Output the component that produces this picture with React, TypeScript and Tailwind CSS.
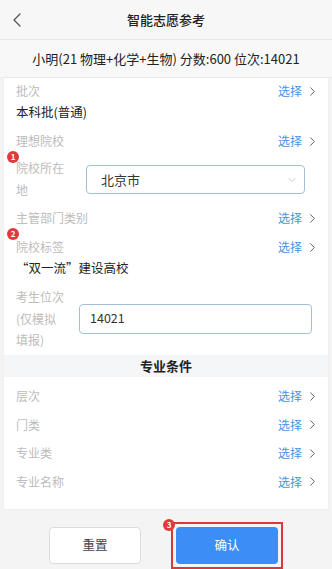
import { ChevronLeft, ChevronRight, ChevronDown } from "lucide-react"

const font = { fontFamily: '"Noto Sans CJK SC", "Noto Sans", sans-serif' }

function Badge({ n }: { n: number }) {
  return (
    <span className="absolute left-[-9px] top-[-6px] w-[12px] h-[12px] rounded-full bg-[#e23a3a] text-white text-[8px] leading-[12px] text-center font-bold">
      {n}
    </span>
  )
}

function SelectLink() {
  return (
    <div className="flex items-center gap-[3px]">
      <span className="text-[#4a92dd] text-[12px]">选择</span>
      <ChevronRight className="w-[15px] h-[15px] text-[#555]" strokeWidth={1.5} />
    </div>
  )
}

function PickRow({ label }: { label: string }) {
  return (
    <div className="flex items-center justify-between h-[26px]">
      <span className="text-[#bcbcbc] text-[12px]">{label}</span>
      <SelectLink />
    </div>
  )
}

export default function App() {
  return (
    <div style={font} className="w-[332px] h-[569px] bg-[#f4f4f5] flex flex-col overflow-hidden">
      {/* Header */}
      <div className="h-[40px] flex items-center relative bg-[#f7f7f8] border-b border-[#e6e6e6]">
        <ChevronLeft className="absolute left-[5px] w-[24px] h-[24px] text-[#555]" strokeWidth={1.3} />
        <div className="flex-1 text-center text-[13px] font-medium text-[#222]">智能志愿参考</div>
      </div>

      {/* Student info */}
      <div className="h-[38px] flex items-center justify-center bg-[#f8f8f9] text-[13px] text-[#222] border-b border-[#ececec]">
        小明(21 物理+化学+生物) 分数:600 位次:14021
      </div>

      {/* Card */}
      <div className="mx-[4px] bg-white pl-[12px] pr-[8px] pb-[14px] shadow-[0_0_2px_rgba(0,0,0,0.06)]">
        <PickRow label="批次" />
        <div className="h-[16px] flex items-center text-[12.5px] text-[#222]">本科批(普通)</div>

        <div className="mt-[8px]">
          <PickRow label="理想院校" />
        </div>

        <div className="mt-[3px] flex items-start h-[44px] relative">
          <Badge n={1} />
          <div className="w-[56px] text-[12px] leading-[22px] text-[#bcbcbc]">
            院校所在
            <br />
            地
          </div>
          <div className="ml-[14px] mt-[8px] w-[219px] h-[29px] rounded-[4px] border border-[#a6bfd4] flex items-center justify-between pl-[14px] pr-[6px]">
            <span className="text-[13px] text-[#333]">北京市</span>
            <ChevronDown className="w-[12px] h-[12px] text-[#bbb]" strokeWidth={1.5} />
          </div>
        </div>

        <div className="mt-[4px]">
          <PickRow label="主管部门类别" />
        </div>

        <div className="mt-[3px] relative">
          <Badge n={2} />
          <PickRow label="院校标签" />
        </div>
        <div className="h-[16px] flex items-center text-[12.5px] text-[#222]">“双一流”建设高校</div>

        <div className="mt-[10px] flex items-center h-[65px]">
          <div className="w-[50px] text-[12px] leading-[21.5px] text-[#bcbcbc]">
            考生位次
            <br />
            (仅模拟
            <br />
            填报)
          </div>
          <div className="ml-[13px] w-[233px] h-[30px] rounded-[4px] border border-[#a6bfd4] flex items-center pl-[10px] text-[12.5px] text-[#333]">
            14021
          </div>
        </div>

        <div className="mt-[4px] -ml-[12px] -mr-[8px] h-[22px] bg-[#f5f6f8] flex items-center justify-center text-[13px] font-bold text-[#222]">
          专业条件
        </div>

        <div className="mt-[6px] flex flex-col gap-[2.5px]">
          <PickRow label="层次" />
          <PickRow label="门类" />
          <PickRow label="专业类" />
          <PickRow label="专业名称" />
        </div>
      </div>

      {/* Buttons */}
      <div className="flex items-start mt-[18px] pl-[49px]">
        <button className="w-[92px] h-[37px] rounded-[4px] bg-white border border-[#dcdcdc] text-[12.5px] text-[#444]">
          重置
        </button>
        <div className="relative ml-[30px] -mt-[5px] border-[2px] border-[#d63a3a] p-[3px]">
          <span className="absolute left-[-10px] top-[-5px] w-[12px] h-[12px] rounded-full bg-[#e23a3a] text-white text-[8px] leading-[12px] text-center font-bold">
            3
          </span>
          <button className="w-[102px] h-[37px] rounded-[4px] bg-[#3a8ef6] text-white text-[12.5px]">
            确认
          </button>
        </div>
      </div>
    </div>
  )
}
